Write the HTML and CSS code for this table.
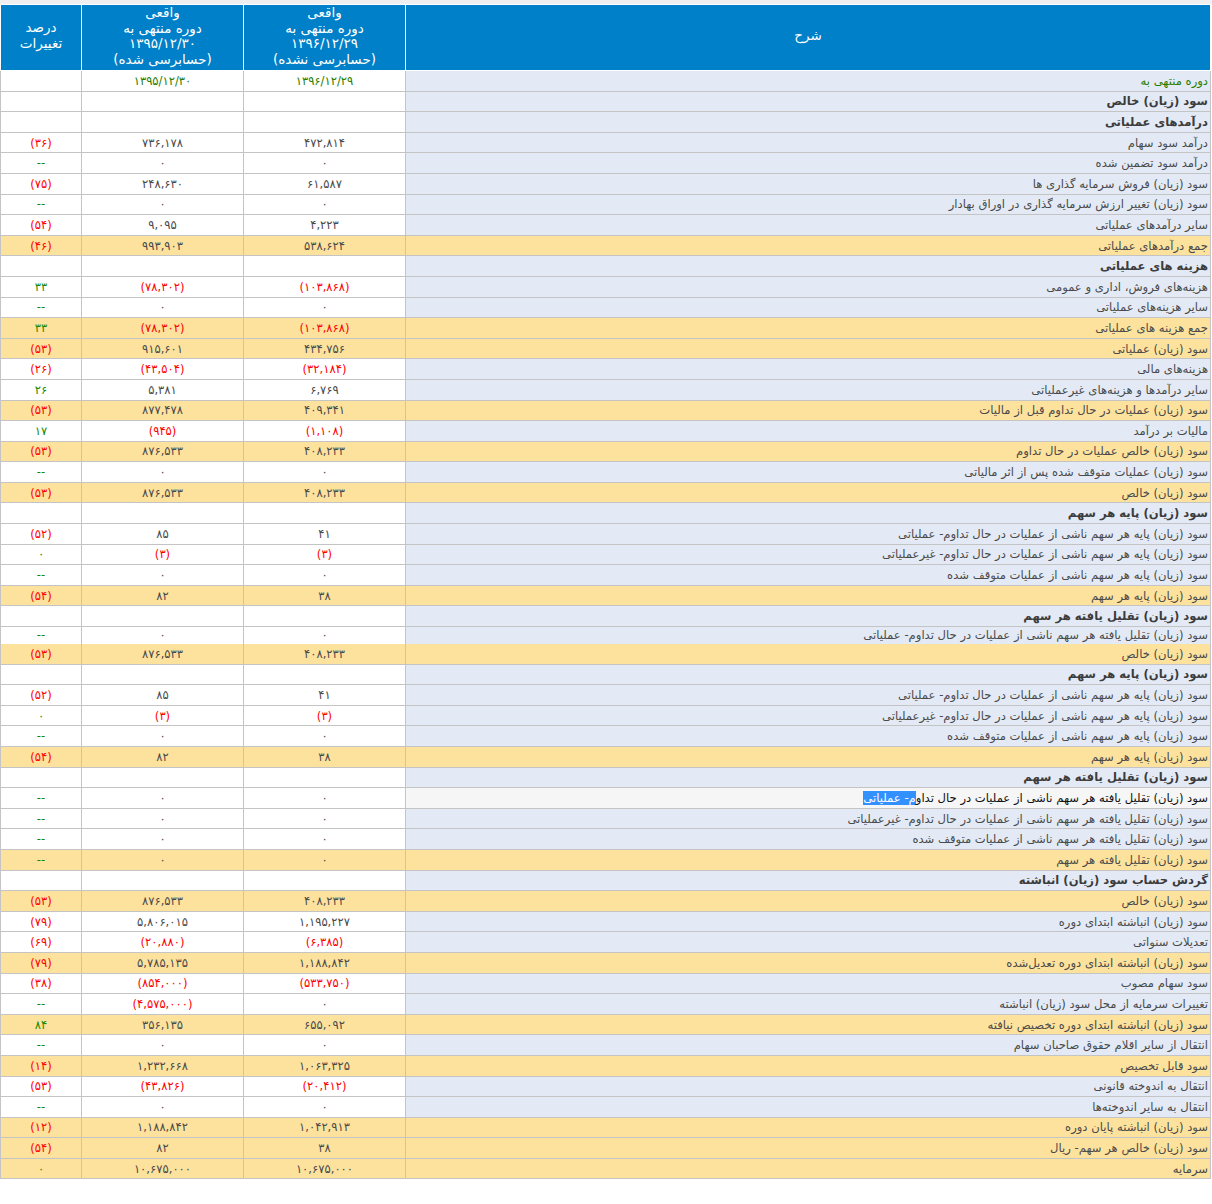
FILE: index.html
```html
<!DOCTYPE html>
<html lang="fa">
<head>
<meta charset="utf-8">
<title>صورت سود و زیان</title>
<link rel="stylesheet" href="styles.css">
</head>
<body>
<div class="topband"></div>
<table class="fin" dir="rtl">
<colgroup><col class="c-desc"><col class="c-val"><col class="c-val"><col class="c-pct"></colgroup>
<thead>
<tr>
<th class="h-desc">شرح</th>
<th>واقعی<br>دوره منتهی به<br>۱۳۹۶/۱۲/۲۹<br>(حسابرسی نشده)</th>
<th>واقعی<br>دوره منتهی به<br>۱۳۹۵/۱۲/۳۰<br>(حسابرسی شده)</th>
<th class="h-pct">درصد<br>تغییرات</th>
</tr>
</thead>
<tbody>
<tr class="date"><td class="d">دوره منتهی به</td><td>۱۳۹۶/۱۲/۲۹</td><td>۱۳۹۵/۱۲/۳۰</td><td></td></tr>
<tr class="b"><td class="d">سود (زیان) خالص</td><td></td><td></td><td></td></tr>
<tr class="b"><td class="d">درآمدهای عملیاتی</td><td></td><td></td><td></td></tr>
<tr><td class="d">درآمد سود سهام</td><td>۴۷۲,۸۱۴</td><td>۷۳۶,۱۷۸</td><td class="n">(۳۶)</td></tr>
<tr><td class="d">درآمد سود تضمین شده</td><td>۰</td><td>۰</td><td class="g">--</td></tr>
<tr><td class="d">سود (زیان) فروش سرمایه گذاری ها</td><td>۶۱,۵۸۷</td><td>۲۴۸,۶۳۰</td><td class="n">(۷۵)</td></tr>
<tr><td class="d">سود (زیان) تغییر ارزش سرمایه گذاری در اوراق بهادار</td><td>۰</td><td>۰</td><td class="g">--</td></tr>
<tr><td class="d">سایر درآمدهای عملیاتی</td><td>۴,۲۲۳</td><td>۹,۰۹۵</td><td class="n">(۵۴)</td></tr>
<tr class="s"><td class="d">جمع درآمدهای عملیاتی</td><td>۵۳۸,۶۲۴</td><td>۹۹۳,۹۰۳</td><td class="n">(۴۶)</td></tr>
<tr class="b"><td class="d">هزینه های عملیاتی</td><td></td><td></td><td></td></tr>
<tr><td class="d">هزینه‌های فروش، اداری و عمومی</td><td class="n">(۱۰۳,۸۶۸)</td><td class="n">(۷۸,۳۰۲)</td><td class="g">۳۳</td></tr>
<tr><td class="d">سایر هزینه‌های عملیاتی</td><td>۰</td><td>۰</td><td class="g">--</td></tr>
<tr class="s"><td class="d">جمع هزینه های عملیاتی</td><td class="n">(۱۰۳,۸۶۸)</td><td class="n">(۷۸,۳۰۲)</td><td class="g">۳۳</td></tr>
<tr class="s"><td class="d">سود (زیان) عملیاتی</td><td>۴۳۴,۷۵۶</td><td>۹۱۵,۶۰۱</td><td class="n">(۵۳)</td></tr>
<tr><td class="d">هزینه‌های مالی</td><td class="n">(۳۲,۱۸۴)</td><td class="n">(۴۳,۵۰۴)</td><td class="n">(۲۶)</td></tr>
<tr><td class="d">سایر درآمدها و هزینه‌های غیرعملیاتی</td><td>۶,۷۶۹</td><td>۵,۳۸۱</td><td class="g">۲۶</td></tr>
<tr class="s"><td class="d">سود (زیان) عملیات در حال تداوم قبل از مالیات</td><td>۴۰۹,۳۴۱</td><td>۸۷۷,۴۷۸</td><td class="n">(۵۳)</td></tr>
<tr><td class="d">مالیات بر درآمد</td><td class="n">(۱,۱۰۸)</td><td class="n">(۹۴۵)</td><td class="g">۱۷</td></tr>
<tr class="s"><td class="d">سود (زیان) خالص عملیات در حال تداوم</td><td>۴۰۸,۲۳۳</td><td>۸۷۶,۵۳۳</td><td class="n">(۵۳)</td></tr>
<tr><td class="d">سود (زیان) عملیات متوقف شده پس از اثر مالیاتی</td><td>۰</td><td>۰</td><td class="g">--</td></tr>
<tr class="s"><td class="d">سود (زیان) خالص</td><td>۴۰۸,۲۳۳</td><td>۸۷۶,۵۳۳</td><td class="n">(۵۳)</td></tr>
<tr class="b"><td class="d">سود (زیان) پایه هر سهم</td><td></td><td></td><td></td></tr>
<tr><td class="d">سود (زیان) پایه هر سهم ناشی از عملیات در حال تداوم- عملیاتی</td><td>۴۱</td><td>۸۵</td><td class="n">(۵۲)</td></tr>
<tr><td class="d">سود (زیان) پایه هر سهم ناشی از عملیات در حال تداوم- غیرعملیاتی</td><td class="n">(۳)</td><td class="n">(۳)</td><td class="g">۰</td></tr>
<tr><td class="d">سود (زیان) پایه هر سهم ناشی از عملیات متوقف شده</td><td>۰</td><td>۰</td><td class="g">--</td></tr>
<tr class="s"><td class="d">سود (زیان) پایه هر سهم</td><td>۳۸</td><td>۸۲</td><td class="n">(۵۴)</td></tr>
<tr class="b"><td class="d">سود (زیان) تقلیل یافته هر سهم</td><td></td><td></td><td></td></tr>
<tr class="short"><td class="d">سود (زیان) تقلیل یافته هر سهم ناشی از عملیات در حال تداوم- عملیاتی</td><td>۰</td><td>۰</td><td class="g">--</td></tr>
<tr class="s joined"><td class="d">سود (زیان) خالص</td><td>۴۰۸,۲۳۳</td><td>۸۷۶,۵۳۳</td><td class="n">(۵۳)</td></tr>
<tr class="b"><td class="d">سود (زیان) پایه هر سهم</td><td></td><td></td><td></td></tr>
<tr><td class="d">سود (زیان) پایه هر سهم ناشی از عملیات در حال تداوم- عملیاتی</td><td>۴۱</td><td>۸۵</td><td class="n">(۵۲)</td></tr>
<tr><td class="d">سود (زیان) پایه هر سهم ناشی از عملیات در حال تداوم- غیرعملیاتی</td><td class="n">(۳)</td><td class="n">(۳)</td><td class="g">۰</td></tr>
<tr><td class="d">سود (زیان) پایه هر سهم ناشی از عملیات متوقف شده</td><td>۰</td><td>۰</td><td class="g">--</td></tr>
<tr class="s"><td class="d">سود (زیان) پایه هر سهم</td><td>۳۸</td><td>۸۲</td><td class="n">(۵۴)</td></tr>
<tr class="b"><td class="d">سود (زیان) تقلیل یافته هر سهم</td><td></td><td></td><td></td></tr>
<tr class="hover"><td class="d">سود (زیان) تقلیل یافته هر سهم ناشی از عملیات در حال تداو<span class="sel">م- عملیاتی</span></td><td>۰</td><td>۰</td><td class="g">--</td></tr>
<tr><td class="d">سود (زیان) تقلیل یافته هر سهم ناشی از عملیات در حال تداوم- غیرعملیاتی</td><td>۰</td><td>۰</td><td class="g">--</td></tr>
<tr><td class="d">سود (زیان) تقلیل یافته هر سهم ناشی از عملیات متوقف شده</td><td>۰</td><td>۰</td><td class="g">--</td></tr>
<tr class="s"><td class="d">سود (زیان) تقلیل یافته هر سهم</td><td>۰</td><td>۰</td><td class="g">--</td></tr>
<tr class="b"><td class="d">گردش حساب سود (زیان) انباشته</td><td></td><td></td><td></td></tr>
<tr class="s"><td class="d">سود (زیان) خالص</td><td>۴۰۸,۲۳۳</td><td>۸۷۶,۵۳۳</td><td class="n">(۵۳)</td></tr>
<tr><td class="d">سود (زیان) انباشته ابتدای دوره</td><td>۱,۱۹۵,۲۲۷</td><td>۵,۸۰۶,۰۱۵</td><td class="n">(۷۹)</td></tr>
<tr><td class="d">تعدیلات سنواتی</td><td class="n">(۶,۳۸۵)</td><td class="n">(۲۰,۸۸۰)</td><td class="n">(۶۹)</td></tr>
<tr class="s"><td class="d">سود (زیان) انباشته ابتدای دوره تعدیل‌شده</td><td>۱,۱۸۸,۸۴۲</td><td>۵,۷۸۵,۱۳۵</td><td class="n">(۷۹)</td></tr>
<tr><td class="d">سود سهام مصوب</td><td class="n">(۵۳۳,۷۵۰)</td><td class="n">(۸۵۴,۰۰۰)</td><td class="n">(۳۸)</td></tr>
<tr><td class="d">تغییرات سرمایه از محل سود (زیان) انباشته</td><td>۰</td><td class="n">(۴,۵۷۵,۰۰۰)</td><td class="g">--</td></tr>
<tr class="s"><td class="d">سود (زیان) انباشته ابتدای دوره تخصیص نیافته</td><td>۶۵۵,۰۹۲</td><td>۳۵۶,۱۳۵</td><td class="g">۸۴</td></tr>
<tr><td class="d">انتقال از سایر اقلام حقوق صاحبان سهام</td><td>۰</td><td>۰</td><td class="g">--</td></tr>
<tr class="s"><td class="d">سود قابل تخصیص</td><td>۱,۰۶۳,۳۲۵</td><td>۱,۲۳۲,۶۶۸</td><td class="n">(۱۴)</td></tr>
<tr><td class="d">انتقال به اندوخته قانونی</td><td class="n">(۲۰,۴۱۲)</td><td class="n">(۴۳,۸۲۶)</td><td class="n">(۵۳)</td></tr>
<tr><td class="d">انتقال به سایر اندوخته‌ها</td><td>۰</td><td>۰</td><td class="g">--</td></tr>
<tr class="s"><td class="d">سود (زیان) انباشته پایان دوره</td><td>۱,۰۴۲,۹۱۳</td><td>۱,۱۸۸,۸۴۲</td><td class="n">(۱۲)</td></tr>
<tr class="s"><td class="d">سود (زیان) خالص هر سهم- ریال</td><td>۳۸</td><td>۸۲</td><td class="n">(۵۴)</td></tr>
<tr class="s"><td class="d">سرمایه</td><td>۱۰,۶۷۵,۰۰۰</td><td>۱۰,۶۷۵,۰۰۰</td><td class="g">۰</td></tr>
</tbody>
</table>
</body>
</html>
```
FILE: styles.css
```css
html, body {
  margin: 0;
  padding: 0;
  background: #ffffff;
}
body {
  font-family: "DejaVu Sans", "Noto Sans", sans-serif;
}
.topband {
  height: 4px;
  background: #efefef;
}
.fin {
  width: 1210px;
  border-collapse: collapse;
  table-layout: fixed;
  direction: rtl;
}
.c-desc { width: 805px; }
.c-val { width: 162px; }
.c-pct { width: 81px; }

.fin thead tr {
  height: 66px;
}
.fin th {
  background: #0080c8;
  color: #ffffff;
  font-weight: normal;
  font-size: 13.5px;
  line-height: 15.6px;
  padding: 0;
  border: 1px solid #ffffff;
  text-align: center;
  vertical-align: top;
}
.fin th.h-desc,
.fin th.h-pct {
  vertical-align: middle;
  padding-bottom: 4px;
}
.fin tbody tr {
  height: 20.6px;
}
.fin td {
  border: 1px solid #c4c4c4;
  padding: 0 2px;
  font-size: 11.6px;
  line-height: 14px;
  color: #4a4a4a;
  text-align: center;
  vertical-align: middle;
  background: #ffffff;
  white-space: nowrap;
}
.fin td.d {
  text-align: right;
  background: #e3eaf6;
}
.fin tr.b td.d {
  font-weight: bold;
  color: #3c3c3c;
}
.fin tr.s td {
  background: #fde29e;
}
.fin tr.date td {
  color: #2a7d00;
}
.fin td.n { color: #ff0000; }
.fin td.g { color: #1a8a00; }

.fin tr.short { height: 17px; }
.fin tr.short td { border-bottom-style: hidden; }
.fin tr.joined td { border-top-style: hidden; }

.fin tr.hover td.d {
  background: #f6f6f6;
  color: #111111;
}
.sel {
  background: #3390ff;
  color: #ffffff;
}
```
